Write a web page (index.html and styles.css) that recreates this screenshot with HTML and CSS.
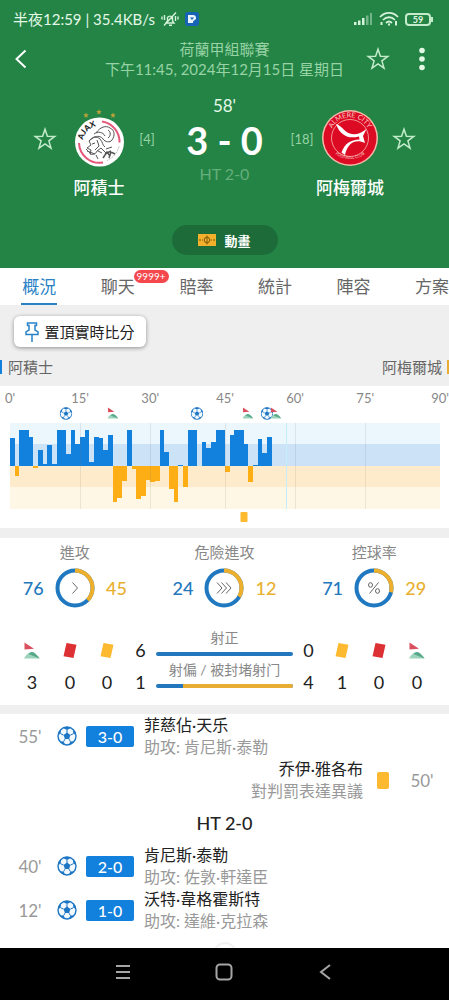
FILE: index.html
```html
<!DOCTYPE html>
<html lang="zh-Hant">
<head>
    <meta charset="UTF-8">
    <meta name="viewport" content="width=device-width, initial-scale=1">
    <title>阿積士 3 - 0 阿梅爾城</title>
    <link rel="stylesheet" href="styles.css">
</head>
<body>

<svg class="sprite" aria-hidden="true">
    <symbol id="star" viewBox="0 0 24 24">
        <path d="M12 2.2l2.4 7.1 7.4.1-5.9 4.5 2.1 7.2-6-4.3-6 4.3 2.1-7.2-5.9-4.5 7.4-.1z" fill="none" stroke="#c4eccb" stroke-width="1.5"/>
    </symbol>
    <symbol id="ball" viewBox="0 0 20 20">
        <circle cx="10" cy="10" r="9" fill="#f2f9ff" stroke="#1c76c4" stroke-width="1.4"/>
        <path d="M10 6.6l3.4 2.5-1.3 4H7.9l-1.3-4z" fill="#1c76c4"/>
        <path d="M6 1.9L10 4l4-2.1-4-1.1zM1 9l2.6-1.3.6-4.5L1.7 6zM19 9l-2.6-1.3-.6-4.5L18.3 6zM3 15.2l3.6.4 1.6 3.1L5 17.8zM17 15.2l-3.6.4-1.6 3.1 3.2-.9z" fill="#1c76c4"/>
        <path d="M10 4v3M3.6 7.7l3 1.4M16.4 7.7l-3 1.4M6.6 15.6l1.4-2.5M13.4 15.6L12 13.1" stroke="#1c76c4"/>
    </symbol>
    <symbol id="corner" viewBox="0 0 16 17">
        <path d="M.5.5l9.5 6.3-9.5.7z" fill="#d9505f"/>
        <path d="M0 16.5c2-3.500 4.500-6.500 7.500-6.500s6 3.500 8 6.500z" fill="#9bd3bd"/>
        <path d="M7.500 10c3 0 6 3.500 8 6.500L4.500 12z" fill="#57a888"/>
    </symbol>
    <symbol id="card" viewBox="0 0 14 17">
        <path d="M3.500 1l10 1.800-3 13.200-10-1.800z" fill="currentColor"/>
    </symbol>
</svg>

<header class="header">
    <div class="status">
        <span>半夜12:59 | 35.4KB/s</span>
        <svg class="mute" width="18" height="16" viewBox="0 0 18 16" fill="none" stroke="#d5f2da" stroke-width="1.400">
            <path d="M5 12h8l-1.500-2V6.500a3 3 0 0 0-5 0V10zM8 14.300h3M3 14.500L15 1.500M3.500 4v5M1 5.500v3M14.500 5v5M17 5.500v3"/>
        </svg>
        <svg width="14" height="14" viewBox="0 0 14 14">
            <rect width="14" height="14" rx="3" fill="#1763b5"/>
            <path d="M3 3h5a3 3 0 0 1 3 3v5H3z" fill="#eaf6ff"/>
            <path d="M5 5.500h4L7 8zM8 9.500L11 7v4H8z" fill="#1763b5"/>
        </svg>
        <svg class="signal" width="19" height="14" viewBox="0 0 19 14" fill="#d5f2da">
            <path d="M0 10h2.500v3H0zM4 8.500h2.500V13H4zM8 6h2.500v7H8z"/>
            <path d="M12 3.500h2.500V13H12zM16 1h2v12h-2z" opacity=".45"/>
        </svg>
        <svg width="20" height="16" viewBox="0 0 20 16" fill="none" stroke="#d5f2da" stroke-width="1.800">
            <path d="M1 6c5-5.500 13-5.500 18 0M4 9c3.500-3.700 8.500-3.700 12 0M7 12c2-2 4-2 6 0"/>
            <path d="M10 12.500v2M2.500 11v3M17 10v4.500" stroke-width="2"/>
        </svg>
        <span class="battery">59</span>
    </div>

    <div class="titlebar">
        <button class="icon-btn" aria-label="返回">
            <svg width="12" height="20" viewBox="0 0 12 20" fill="none" stroke="#fff" stroke-width="2"><path d="M10.500 1.500L1.500 10l9 8.500"/></svg>
        </button>
        <h1>荷蘭甲組聯賽<br>下午11:45, 2024年12月15日 星期日</h1>
        <div class="actions">
            <button class="icon-btn" aria-label="收藏"><svg width="24" height="24"><use href="#star"/></svg></button>
            <button class="icon-btn" aria-label="更多">
                <svg width="24" height="24" viewBox="0 0 24 24" fill="#e4f8e6"><circle cx="12" cy="3.500" r="2.800"/><circle cx="12" cy="12" r="2.800"/><circle cx="12" cy="20.500" r="2.800"/></svg>
            </button>
        </div>
    </div>

    <div class="match">
        <button class="icon-btn side" aria-label="收藏阿積士"><svg width="24" height="24"><use href="#star"/></svg></button>
        <div class="team">
            <svg width="58" height="58" viewBox="0 0 58 58">
                <g fill="#b9a23a">
                    <path d="M16 3.500l.8 1.700 2 .2-1.500 1.300.4 2-1.700-1-1.700 1 .4-2-1.500-1.300 2-.2z"/>
                    <path d="M29 .3l.8 1.700 2 .2-1.500 1.300.4 2-1.700-1-1.700 1 .4-2-1.500-1.300 2-.2z"/>
                    <path d="M43 3.500l.8 1.700 2 .2-1.500 1.300.4 2-1.700-1-1.700 1 .4-2-1.500-1.300 2-.2z"/>
                </g>
                <circle cx="29.500" cy="33" r="24.500" fill="#fff"/>
                <path d="M32 12.500a20.500 20.500 0 0 1 17.500 21M9 34a20.500 20.500 0 0 0 24 19.500" fill="none" stroke="#e4587a" stroke-width="2"/>
                <path d="M37 51.500a21 21 0 0 0 12-14" fill="none" stroke="#999" stroke-dasharray="1 1"/>
                <path id="ajaxArc" d="M13 31a17.500 17.500 0 0 1 20-14" fill="none"/>
                <text class="ajax"><textPath href="#ajaxArc">AJAX</textPath></text>
                <g fill="none" stroke="#555" stroke-width="1">
                    <path d="M26 24c4-6 10-8 14-5 5 2 5 8 2 12-2 3-7 2-9-1s-6-3-9-2l-5 4 2 4-4 3 4 2-1 4c3 1 6 0 7-3l4-3 5 5M19 32c3-4 8-5 11-2s2 6 5 8M24 25c4-3 9-2 11 2M22 35l3-1M27 31l2 6-4 4M28 42l4 2M17 42l8 3M16 40l5 5M26 46l2 4M36 40l6-2M38 21c3 2 3 6 0 8"/>
                    <path d="M33 49l4-6 3 4M35 45l6-3M39 49l2-6 4 2" stroke-width="1.500"/>
                </g>
            </svg>
            <strong>阿積士</strong>
        </div>
        <span class="rank side">[4]</span>
        <div class="score">
            <span class="minute">58'</span>
            <strong>3 - 0</strong>
            <span class="half">HT 2-0</span>
        </div>
        <span class="rank side">[18]</span>
        <div class="team">
            <svg width="58" height="58" viewBox="0 0 58 58">
                <circle cx="29" cy="29" r="28" fill="#f6b9a8"/>
                <circle cx="29" cy="29" r="26.500" fill="#dd0a24"/>
                <circle cx="29" cy="29" r="18.500" fill="none" stroke="#f6b9b0" stroke-width=".8"/>
                <path id="almTop" d="M9.500 24a20 20 0 0 1 39 0" fill="none"/>
                <path id="almBottom" d="M12 43a24 24 0 0 0 34 0" fill="none"/>
                <text class="alm-top"><textPath href="#almTop" startOffset="50%">ALMERE CITY</textPath></text>
                <text class="alm-bottom"><textPath href="#almBottom" startOffset="50%">FOOTBALL CLUB</textPath></text>
                <path d="M15 15c4 1 7 5 10 7.500 6 4.500 13 3.500 20.500-2.500l-3.500 7 2 7c-9-4-17-1-20 12l-3.500-2.500c3-9 9-12.500 18-13l-.5-3c-12 3-19-2-23-12.500z" fill="#fff"/>
            </svg>
            <strong>阿梅爾城</strong>
        </div>
        <button class="icon-btn side" aria-label="收藏阿梅爾城"><svg width="24" height="24"><use href="#star"/></svg></button>
    </div>

    <button class="anim-btn">
        <svg width="18" height="12" viewBox="0 0 18 12">
            <rect width="18" height="12" fill="#f5b02b"/>
            <g fill="none" stroke="#7a5a10"><circle cx="9" cy="6" r="2.800"/><path d="M9 1.500v9M2 5v2M16 5v2M4 6h1M13 6h1"/></g>
        </svg>
        動畫
    </button>
</header>

<nav class="tabs">
    <a class="active" href="#overview">概況</a>
    <a href="#chat">聊天<span class="badge">9999+</span></a>
    <a href="#odds">賠率</a>
    <a href="#stats">統計</a>
    <a href="#lineup">陣容</a>
    <a href="#plan">方案</a>
</nav>

<main>
    <section class="pin-area">
        <button class="pin-btn">
            <svg width="14" height="20" viewBox="0 0 14 20" fill="none" stroke="#2a82c6" stroke-width="1.500"><path d="M2.500 1h9v2.500H10V8l3 2v2.500H1V10l3-2V3.500H2.500zM7 12.500V20"/></svg>
            置頂實時比分
        </button>
        <div class="sides">
            <span class="home">阿積士</span>
            <span class="away">阿梅爾城</span>
        </div>
    </section>

    <section class="momentum">
        <div class="axis" id="axis"></div>
        <div class="marks" id="homeMarks"></div>
        <div class="bars" id="bars"></div>
        <div class="marks" id="awayMarks"></div>
    </section>

    <section class="stats">
        <div class="rings">
            <div class="ring">
                <h2>進攻</h2>
                <span class="blue">76</span>
                <svg width="40" height="40" viewBox="0 0 40 40" fill="none">
                    <circle cx="20" cy="20" r="17.500"/>
                    <circle class="part" cx="20" cy="20" r="17.500" pathLength="121" stroke-dasharray="45 121"/>
                    <path d="M17.500 14.500l5 5.500-5 5.500"/>
                </svg>
                <span class="yellow">45</span>
            </div>
            <div class="ring">
                <h2>危險進攻</h2>
                <span class="blue">24</span>
                <svg width="40" height="40" viewBox="0 0 40 40" fill="none">
                    <circle cx="20" cy="20" r="17.500"/>
                    <circle class="part" cx="20" cy="20" r="17.500" pathLength="36" stroke-dasharray="12 36"/>
                    <path d="M13 14.500l5 5.500-5 5.500M17.500 14.500l5 5.500-5 5.500M22 14.500l5 5.500-5 5.500"/>
                </svg>
                <span class="yellow">12</span>
            </div>
            <div class="ring">
                <h2>控球率</h2>
                <span class="blue">71</span>
                <svg width="40" height="40" viewBox="0 0 40 40" fill="none">
                    <circle cx="20" cy="20" r="17.500"/>
                    <circle class="part" cx="20" cy="20" r="17.500" pathLength="100" stroke-dasharray="29 100"/>
                    <path d="M24.500 14.500l-9 11"/>
                    <ellipse cx="16.500" cy="17" rx="2" ry="2.300"/>
                    <ellipse cx="23.500" cy="23" rx="2" ry="2.300"/>
                </svg>
                <span class="yellow">29</span>
            </div>
        </div>

        <div class="counts">
            <svg width="16" height="17"><use href="#corner"/></svg>
            <svg class="red" width="14" height="17"><use href="#card"/></svg>
            <svg class="amber" width="14" height="17"><use href="#card"/></svg>
            <span>6</span>
            <div class="shots"><span>射正</span><div class="track"></div></div>
            <span>0</span>
            <svg class="amber" width="14" height="17"><use href="#card"/></svg>
            <svg class="red" width="14" height="17"><use href="#card"/></svg>
            <svg width="16" height="17"><use href="#corner"/></svg>

            <span>3</span>
            <span>0</span>
            <span>0</span>
            <span>1</span>
            <div class="shots"><span>射偏 / 被封堵射门</span><div class="track"><i style="width: 80%"></i></div></div>
            <span>4</span>
            <span>1</span>
            <span>0</span>
            <span>0</span>
        </div>
    </section>

    <section class="events">
        <div class="event">
            <time>55'</time>
            <svg width="20" height="20"><use href="#ball"/></svg>
            <b>3-0</b>
            <p>菲慈佔·天乐<small>助攻: 肯尼斯·泰勒</small></p>
        </div>
        <div class="event away">
            <p>乔伊·雅各布<small>對判罰表達異議</small></p>
            <i class="booking"></i>
            <time>50'</time>
        </div>
        <h3>HT 2-0</h3>
        <div class="event">
            <time>40'</time>
            <svg width="20" height="20"><use href="#ball"/></svg>
            <b>2-0</b>
            <p>肯尼斯·泰勒<small>助攻: 佐敦·軒達臣</small></p>
        </div>
        <div class="event">
            <time>12'</time>
            <svg width="20" height="20"><use href="#ball"/></svg>
            <b>1-0</b>
            <p>沃特·韋格霍斯特<small>助攻: 達維·克拉森</small></p>
        </div>
        <span class="whistle"></span>
    </section>
</main>

<footer class="navbar">
    <button aria-label="選單"><svg width="20" height="20" viewBox="0 0 20 20"><path d="M3 4h14M3 10h14M3 16h14"/></svg></button>
    <button aria-label="主頁"><svg width="20" height="20" viewBox="0 0 20 20"><rect x="2.500" y="2.500" width="15" height="15" rx="3.500"/></svg></button>
    <button aria-label="返回"><svg width="20" height="20" viewBox="0 0 20 20"><path d="M14 3l-9 7 9 7"/></svg></button>
</footer>

<script>
    // one column per minute, each half has one extra for stoppage time
    const COLUMNS = 92;

    // above zero = home pressure, below zero = away pressure
    const pressure = [
        28, -10, 36, 36, 29, -2, 16, 2, 21, 2, 36, 36, 12, 36, 22,
        29, 36, 4, 29, 28, 16, 31, -36, -32, -15, 36, -3, -33, -30, -14,
        -16, -15, 36, 14, -23, -36, 1, -21, 36, 36, 0, 24, 18, 24, 36, 36,
        -6, 31, 36, 36, 22, -16, 1, 27, 13, 29
    ];
    const ticks = [[0, 0], [15, 15], [30, 30], [45, 46], [60, 61], [75, 76], [90, 92]];
    const homeMarks = [[12, 'ball'], [22, 'corner'], [40, 'ball'], [51, 'corner'], [55, 'ball'], [57, 'corner']];
    const awayMarks = [[50, 'booking']];

    const percent = col => (col / COLUMNS * 100) + '%';

    function add(parent, className, left, html) {
        const el = document.createElement('span');
        el.className = className;
        if (left !== null) el.style.left = left;
        el.innerHTML = html;
        document.getElementById(parent).append(el);
        return el;
    }

    pressure.forEach(value => {
        const bar = add('bars', value < 0 ? 'bar down' : 'bar', null, '');
        bar.style.height = Math.abs(value) + 'px';
    });

    ticks.forEach(([minute, col]) => {
        add('axis', 'tick', percent(col), minute + "'");
        if (minute > 0 && minute < 90) add('bars', 'line', percent(col), '');
    });
    add('bars', 'line now', percent(59), '');

    homeMarks.forEach(([col, icon]) => {
        add('homeMarks', 'mark', percent(col), '<svg class="' + icon + '"><use href="#' + icon + '"/></svg>');
    });
    awayMarks.forEach(([col, icon]) => add('awayMarks', 'mark', percent(col), '<i class="' + icon + '"></i>'));
</script>
</body>
</html>
```
FILE: styles.css
```css
* {
    box-sizing: border-box;
}

body {
    margin: 0;
    min-height: 100vh;
    display: flex;
    flex-direction: column;
    overflow-x: hidden;
    font-family: Lato, "Noto Sans CJK TC", sans-serif;
    background-color: #fff;
    color: #222;
}

h1, h2, h3, p {
    margin: 0;
    font-weight: 400;
}

button {
    padding: 0;
    border: none;
    background: none;
    font-family: inherit;
    cursor: pointer;
}

svg {
    display: block;
    flex: none;
}

.sprite {
    position: absolute;
    width: 0;
    height: 0;
}

/* header */
.header {
    background-color: #238446;
    color: #e4f8e6;
    padding-bottom: 13px;
}

.status {
    height: 38px;
    padding: 0 16px 0 13px;
    display: flex;
    align-items: center;
    gap: 6px;
    font-size: 15px;
    line-height: 20px;
}

.signal {
    margin-left: auto;
}

.battery {
    position: relative;
    width: 26px;
    height: 13px;
    margin-right: 2px;
    border: 2px solid #c4eccb;
    border-radius: 4px;
    font-size: 9px;
    line-height: 9px;
    font-weight: 700;
    text-align: center;
}

.battery::after {
    content: "";
    position: absolute;
    right: -4px;
    top: 2px;
    width: 2px;
    height: 5px;
    background-color: #c4eccb;
}

.titlebar {
    height: 42px;
    padding: 0 15px;
    display: grid;
    grid-template-columns: 72px 1fr 72px;
    align-items: center;
}

.titlebar h1 {
    font-size: 15px;
    line-height: 20px;
    color: #97d3a4;
    text-align: center;
    white-space: nowrap;
    justify-self: center;
}

.actions {
    display: flex;
    justify-content: flex-end;
    gap: 20px;
}

.match {
    padding: 16px 33px 0;
    display: grid;
    grid-template-columns: 24px 76px 12px 1fr 12px 76px 24px;
    column-gap: 4px;
    align-items: start;
}

.side {
    height: 86px;
    display: flex;
    align-items: center;
    justify-content: center;
}

.rank {
    font-size: 13px;
    color: #97d3a4;
}

.team {
    padding-top: 13px;
    display: flex;
    flex-direction: column;
    align-items: center;
    gap: 10px;
}

.team strong {
    font-size: 17px;
    line-height: 22px;
    font-weight: 500;
    color: #fff;
    white-space: nowrap;
}

.ajax {
    font-size: 8px;
    font-weight: 900;
    fill: #222;
}

.alm-top,
.alm-bottom {
    font-size: 7px;
    text-anchor: middle;
    fill: #f9cfc8;
}

.alm-bottom {
    font-size: 4px;
}

.score {
    display: flex;
    flex-direction: column;
    align-items: center;
}

.minute {
    font-size: 17px;
    line-height: 20px;
}

.score strong {
    margin: 2px 0;
    font-size: 38px;
    line-height: 44px;
    font-weight: 700;
    color: #fff;
}

.half {
    font-size: 16px;
    line-height: 20px;
    color: #65ae79;
}

.anim-btn {
    margin: 26px auto 0;
    width: 106px;
    height: 30px;
    border-radius: 15px;
    display: flex;
    align-items: center;
    justify-content: center;
    gap: 8px;
    background-color: #1c6b38;
    color: #fff;
    font-size: 13px;
    font-weight: 700;
}

/* tabs */
.tabs {
    height: 37px;
    display: flex;
    overflow: hidden;
}

.tabs a {
    flex: 0 0 17.5%;
    position: relative;
    display: flex;
    justify-content: center;
    font-size: 17px;
    line-height: 37px;
    color: #666;
    text-decoration: none;
}

.tabs .active {
    color: #2a82c6;
}

.tabs .active::after {
    content: "";
    position: absolute;
    bottom: 0;
    width: 36px;
    height: 2px;
    background-color: #2a82c6;
}

.badge {
    position: absolute;
    left: 70%;
    top: 2px;
    padding: 0 3px;
    border-radius: 7px;
    background-color: #f4484d;
    color: #fff;
    font-size: 10px;
    line-height: 13px;
}

main {
    flex: 1;
    display: flex;
    flex-direction: column;
}

/* pin button and team names */
.pin-area {
    padding-top: 11px;
    background-color: #efefef;
}

.pin-btn {
    width: 132px;
    height: 31px;
    margin-left: 14px;
    border-radius: 6px;
    display: flex;
    align-items: center;
    justify-content: center;
    gap: 5px;
    background-color: #fff;
    box-shadow: 0 1px 4px rgba(0, 0, 0, 0.4);
    color: #222;
    font-size: 15px;
    white-space: nowrap;
}

.sides {
    height: 39px;
    display: flex;
    align-items: center;
    justify-content: space-between;
    font-size: 15px;
    line-height: 14px;
    color: #666;
}

.home {
    padding-left: 6px;
    border-left: 2px solid #1280dd;
}

.away {
    padding-right: 5px;
}

.sides .away {
    border-right: 2px solid #e8ac33;
}

/* momentum chart */
.momentum {
    padding: 0 9px 0 10px;
    border-bottom: 10px solid #efefef;
}

.axis,
.marks {
    position: relative;
    height: 19px;
}

.axis {
    padding-top: 3px;
}

.tick,
.mark {
    position: absolute;
    transform: translateX(-50%);
}

.tick {
    font-size: 13px;
    line-height: 18px;
    color: #888;
}

.mark {
    top: 2px;
}

.mark .ball {
    width: 13px;
    height: 13px;
}

.mark .corner {
    width: 11px;
    height: 12px;
}

.mark .booking {
    display: block;
    width: 7px;
    height: 10px;
    margin-top: 1px;
    border-radius: 1px;
}

#homeMarks {
    height: 18px;
}

.bars {
    position: relative;
    height: 86px;
    display: grid;
    grid-template-columns: repeat(92, 1fr);
    grid-template-rows: 43px 43px;
    background: linear-gradient(#ebf6fd 25%, #cce2f6 25% 50%, #feebcb 50% 75%, #fff7e6 75%);
}

.bar {
    grid-row: 1;
    align-self: end;
    background-color: #1280dd;
}

.bar.down {
    position: relative;
    top: 100%;
    align-self: start;
    background-color: #fdae14;
}

.line {
    position: absolute;
    top: 0;
    bottom: 0;
    width: 1px;
    background-color: rgba(120, 120, 120, 0.15);
}

.line.now {
    background-color: #c5eefa;
}

/* stats */
.stats {
    padding: 3px 0 7px;
    border-bottom: 9px solid #efefef;
}

.rings {
    display: grid;
    grid-template-columns: repeat(3, 1fr);
}

.ring {
    display: grid;
    grid-template-columns: 32px 40px 32px;
    justify-content: center;
    align-items: center;
    text-align: center;
    row-gap: 5px;
}

.ring h2 {
    grid-column: 1 / -1;
    font-size: 15px;
    line-height: 22px;
    color: #888;
}

.ring span {
    font-size: 18px;
    font-weight: 500;
}

.ring .blue {
    text-align: left;
}

.ring .yellow {
    text-align: right;
}

.blue {
    color: #2378bd;
}

.yellow {
    color: #e8b02e;
}

.ring circle {
    stroke: #1f78c0;
    stroke-width: 4px;
}

.ring .part {
    stroke: #eeb02c;
    transform: rotate(-90deg);
    transform-origin: center;
}

.ring path,
.ring ellipse {
    stroke: #666;
    stroke-width: 1px;
}

.counts {
    padding: 26px 13px 0;
    display: grid;
    grid-template-columns: 38px 38px 36px 31px 1fr 31px 36px 38px 38px;
    grid-auto-rows: 32px;
    align-items: center;
    justify-items: center;
    font-size: 18px;
}

.red {
    color: #dd3035;
}

.amber {
    color: #fdb92f;
}

.shots {
    align-self: start;
    width: 100%;
    text-align: center;
    font-size: 14px;
    line-height: 8px;
    color: #888;
    white-space: nowrap;
}

.shots span {
    display: block;
    margin-bottom: 10px;
}

.track {
    height: 4px;
    border-radius: 2px;
    overflow: hidden;
    background-color: #2378bd;
}

.track i {
    display: block;
    height: 4px;
    margin-left: auto;
    background-color: #e8ae33;
}

/* timeline */
.events {
    position: relative;
    flex: 1;
    padding-bottom: 16px;
    overflow: hidden;
}

.event {
    height: 44px;
    padding: 0 13px;
    display: flex;
    align-items: center;
}

.event time {
    width: 34px;
    margin-right: 10px;
    font-size: 17px;
    color: #999;
    text-align: center;
}

.event b {
    width: 48px;
    margin: 0 10px 0 9px;
    border-radius: 2px;
    background-color: #1280dd;
    color: #fff;
    font-size: 16px;
    line-height: 21px;
    font-weight: 500;
    text-align: center;
}

.event p {
    font-size: 16px;
    line-height: 22px;
}

.event small {
    display: block;
    font-size: 16px;
    color: #999;
}

.event.away {
    padding: 0 10px;
    justify-content: flex-end;
    text-align: right;
}

.booking {
    width: 12px;
    height: 17px;
    border-radius: 2px;
    background-color: #fdb92f;
}

.event .booking {
    margin-left: 14px;
}

.away time {
    margin: 0 0 0 16px;
}

.events h3 {
    font-size: 18px;
    line-height: 42px;
    font-weight: 500;
    text-align: center;
}

.whistle {
    position: absolute;
    left: 50%;
    bottom: -18px;
    width: 24px;
    height: 24px;
    margin-left: -12px;
    border: 2px solid #f2f2f2;
    border-radius: 50%;
}

/* system navigation */
.navbar {
    height: 52px;
    padding: 0 72px 4px;
    display: flex;
    align-items: center;
    justify-content: space-around;
    background-color: #000;
}

.navbar svg {
    fill: none;
    stroke: #a5a5a5;
    stroke-width: 2px;
}
```
